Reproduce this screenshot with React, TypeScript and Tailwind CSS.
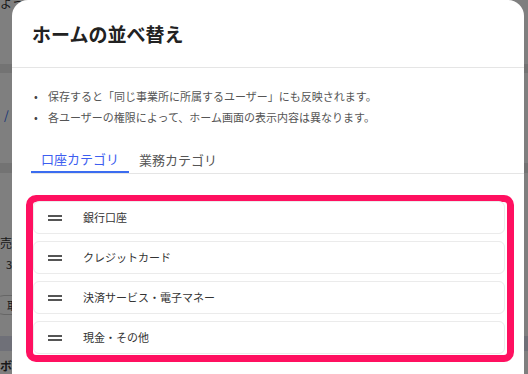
import React from 'react';

// --- DATA ---
const notes = [
  '保存すると「同じ事業所に所属するユーザー」にも反映されます。',
  '各ユーザーの権限によって、ホーム画面の表示内容は異なります。',
];

const tabs = ['口座カテゴリ', '業務カテゴリ'];

const categories = ['銀行口座', 'クレジットカード', '決済サービス・電子マネー', '現金・その他'];

const jp = { fontFamily: '"Noto Sans CJK JP", "Noto Sans", sans-serif' };

// drag handle (two bars)
const HandleIcon: React.FC = () => (
  <svg width="14" height="6" viewBox="0 0 14 6" className="shrink-0">
    <rect x="0" y="0" width="14" height="2" fill="#555" />
    <rect x="0" y="4" width="14" height="2" fill="#555" />
  </svg>
);

// The page that sits behind the dimmed overlay (only a sliver shows)
const BackgroundPage: React.FC = () => (
  <div className="flex flex-col w-full h-full bg-white text-[12px] text-[#333] leading-none" style={jp}>
    <div className="h-[10px] -mt-[3px] whitespace-nowrap">よう</div>
    <div className="h-[57px]" />
    <div className="h-[9px] bg-[#e6e6e6]" />
    <div className="h-[36px]" />
    <div className="h-[14px] pl-[4px] text-[#2563eb] whitespace-nowrap">/</div>
    <div className="h-[40px]" />
    <div className="h-[10px] bg-[#e6e6e6]" />
    <div className="h-[64px]" />
    <div className="h-[14px] whitespace-nowrap">売</div>
    <div className="h-[8px]" />
    <div className="h-[12px] pl-[6px] text-[11px] whitespace-nowrap">3</div>
    <div className="h-[4px]" />
    <div className="h-[12px] pl-[14px] text-[10px] text-[#2563eb] whitespace-nowrap">「</div>
    <div className="h-[8px]" />
    <div className="h-[20px] ml-[-6px] w-[60px] rounded-full border border-[#ccc] pl-[12px] text-[11px] leading-[18px]">取</div>
    <div className="h-[21px]" />
    <div className="h-[15px] bg-[#dfe0f0]" />
    <div className="h-[9px]" />
    <div className="h-[14px] font-bold whitespace-nowrap">ボ</div>
  </div>
);

const App: React.FC = () => {
  return (
    <div className="relative w-[528px] h-[374px] overflow-hidden">
      <BackgroundPage />
      {/* overlay */}
      <div className="absolute inset-0 bg-black/50" />

      {/* modal */}
      <div
        className="absolute left-[12px] top-0 w-[512px] h-[400px] bg-white rounded-t-[16px] flex flex-col"
        style={jp}
      >
        <div className="h-[68px] shrink-0 flex items-center px-[20px] border-b border-[#e5e5e5]">
          <h2 className="text-[19px] font-bold text-[#222] leading-none">ホームの並べ替え</h2>
        </div>

        <ul className="pt-[18px] pl-[22px] flex flex-col text-[11px] text-[#555]">
          {notes.map(n => (
            <li key={n} className="flex items-center h-[21px] whitespace-nowrap">
              <span className="w-[14px] text-[#444]">•</span>
              {n}
            </li>
          ))}
        </ul>

        <div className="mt-[18px] ml-[19px] flex border-b border-[#e5e5e5]">
          {tabs.map((t, i) => (
            <div
              key={t}
              className={
                i === 0
                  ? 'px-[10px] h-[27px] flex items-center text-[13px] text-[#3d5ef0] border-b-2 border-[#3b6cf0] -mb-px'
                  : 'px-[10px] h-[27px] flex items-center text-[13px] text-[#555]'
              }
            >
              {t}
            </div>
          ))}
        </div>

        {/* highlighted category list */}
        <div className="mt-[21px] ml-[14px] w-[488px] border-[7px] border-[#ff1060] rounded-[10px] pr-[2px]">
          <div className="flex flex-col gap-[7px] -mt-[1px] pb-[1px]">
            {categories.map(c => (
              <div
                key={c}
                className="h-[33px] flex items-center border border-[#ebebeb] rounded-[6px] pl-[14px] text-[11px] text-[#333]"
              >
                <HandleIcon />
                <span className="ml-[21px]">{c}</span>
              </div>
            ))}
          </div>
        </div>
      </div>
    </div>
  );
};

export default App;
